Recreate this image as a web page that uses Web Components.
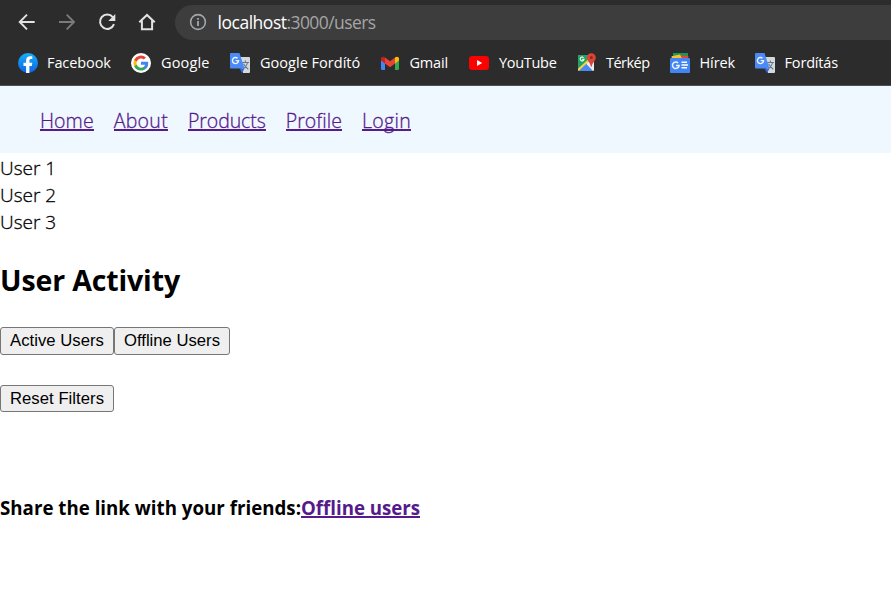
<!DOCTYPE html>
<html lang="hu">
<head>
<meta charset="utf-8">
<title>Users</title>
<style>
body{margin:0;background:#fff;color:#000;font-family:"Open Sans","Noto Sans",sans-serif}
</style>
</head>
<body>
<users-screen></users-screen>
<script>
const define = (name, html, init) => {
  const t = document.createElement('template');
  t.innerHTML = html;
  customElements.define(name, class extends HTMLElement {
    constructor() {
      super();
      this.attachShadow({mode: 'open'}).appendChild(t.content.cloneNode(true));
    }
    connectedCallback() { if (init) init(this); }
  });
};

/* Text run that spreads its letter spacing to fill a given width */
define('fit-text', `<style>:host{display:inline-block;white-space:pre}span{display:inline}</style><span><slot></slot></span>`, el => {
  const w = +el.getAttribute('w');
  const s = el.shadowRoot.querySelector('span');
  s.style.letterSpacing = (w - s.getBoundingClientRect().width) / el.textContent.length + 'px';
  el.style.width = w + 'px';
});

const g = `<path fill="#4285f4" d="M23.5 12.3c0-.9-.1-1.6-.2-2.3H12v4.5h6.5c-.3 1.5-1.1 2.8-2.4 3.6v3h3.9c2.2-2.1 3.5-5.1 3.5-8.8z"/><path fill="#34a853" d="M12 24c3.2 0 6-1.1 8-2.9l-3.9-3c-1.1.7-2.4 1.2-4.1 1.2-3.1 0-5.8-2.1-6.7-5H1.3v3.1C3.300 21.300 7.300 24 12 24z"/><path fill="#fbbc05" d="M5.300 14.300a7.200 7.200 0 010-4.600V6.600H1.300a12 12 0 000 10.800z"/><path fill="#ea4335" d="M12 4.700c1.800 0 3.300.6 4.600 1.800L20 3.100A12 12 0 001.300 6.600l4 3.100c.9-2.900 3.600-5 6.700-5z"/>`;
const smallG = (x, y, s) => `<path transform="translate(${x} ${y}) scale(${s})" fill="none" stroke="#eef4ff" stroke-width="1.5" d="M6.300 1.900A3.300 3.300 0 1 0 7.300 4.400H4.200"/>`;
const translate = `<path fill="#d5d9dd" d="M8 4h11q1 0 1 1v14q0 1-1 1h-6z"/><path fill="none" stroke="#66788a" stroke-width="1.100" d="M12 9.500h7M15.400 7.500v2M17.600 9.500q-.8 4-4.300 6.300M13.500 10.800q1.500 3.200 4.800 5.400"/><path fill="#3367d6" d="M9.500 15.500h5L12 20z"/><path fill="#4c8bf5" d="M1 0h8.500l5 15.500H1q-1 0-1-1V1q0-1 1-1z"/>${smallG(1.8,3.6,.92)}`;
const icons = {
  back: `<path fill="none" stroke="#e3e3e3" stroke-width="1.900" d="M17.700 10H3M10 2.700L2.700 10l7.300 7.300"/>`,
  forward: `<path fill="none" stroke="#7b7b7b" stroke-width="1.900" d="M2 10h14.700M9.700 2.700L17 10l-7.300 7.300"/>`,
  reload: `<path fill="none" stroke="#e3e3e3" stroke-width="2" d="M15.800 5.100A7.200 7.200 0 1 0 17 12.200"/><path fill="#e3e3e3" d="M18.300 2v7h-7z"/>`,
  home: `<path fill="none" stroke="#e3e3e3" stroke-width="2" d="M2.300 10.300L10 3l7.700 7.300M4.900 8.500v8.700h10.200V8.500"/>`,
  info: `<circle cx="10" cy="10" r="7.400" fill="none" stroke="#a5a8ab" stroke-width="1.600"/><path fill="#a5a8ab" d="M9.100 9h1.800v5H9.100zM9.100 5.900h1.800v1.900H9.100z"/>`,
  facebook: `<defs><linearGradient id="f" x2="0" y2="1"><stop stop-color="#19aefb"/><stop offset="1" stop-color="#0a65e4"/></linearGradient></defs><circle cx="10" cy="10" r="10" fill="url(#f)"/><path fill="#fff" d="M8.100 19.900v-7H5.500V9.800h2.600V7.600c0-2.900 1.600-4.300 4.200-4.300 1 0 2 .2 2 .2v2.600h-1.300c-1.200 0-1.600.7-1.600 1.500v2.200h2.900l-.5 3.100h-2.400v7a10 10 0 01-3.300 0z"/>`,
  google: `<circle cx="10" cy="10" r="10" fill="#fff"/><g transform="translate(2.400 2.500) scale(.63)">${g}</g>`,
  translate,
  gmail: `<path fill="#4285f4" d="M1 5.500l4 3V17H2.200Q1 17 1 15.800z"/><path fill="#34a853" d="M15 8.500l4-3v10.300q0 1.200-1.200 1.200H15z"/><path fill="#fbbc04" d="M15 4.500c2-1.500 4-.6 4 1.500v1.500l-4 3z"/><path fill="#c5221f" d="M1 6c0-2.100 2-3 4-1.500v6l-4-3z"/><path fill="#ea4335" d="M5 4.500l5 3.800 5-3.800v6l-5 3.800-5-3.800z"/>`,
  youtube: `<rect y="3" width="20" height="14" rx="3.300" fill="#f00"/><path fill="#fff" d="M8 7l5.200 3L8 13z"/>`,
  maps: `<clipPath id="m"><rect x="1" y="2" width="16" height="16" rx="1.500"/></clipPath><g clip-path="url(#m)"><path fill="#e4e7e8" d="M1 2h16v16H1z"/><path fill="#1fa463" d="M1 2h14v4L1 18z"/><path fill="#4a89f3" d="M1.500 18L9 10.500l7 7.500z"/><path fill="#eceff1" d="M9.200 10.300l3-3L17 12v6z"/><path fill="none" stroke="#fcd23f" stroke-width="2" d="M0 18L13 6"/></g><path transform="translate(2 3.200) scale(.72)" fill="none" stroke="#fff" stroke-width="1.500" d="M6.300 1.900A2.700 2.700 0 1 0 7 4.400H4.500"/><path fill="#dc4437" d="M14.300.2a4.500 4.500 0 014.500 4.500c0 3-3.500 4.500-4.100 9h-.8c-.6-4.500-4.100-6-4.100-9A4.500 4.500 0 0114.300.2z"/><circle cx="14.300" cy="4.600" r="1.500" fill="#8d2924"/>`,
  news: `<path fill="#0c9d58" d="M3 0h15v7H3z"/><path fill="#ea4335" d="M8 2l10.500 1-1 5H6z"/><path fill="#fbc02d" d="M1.500 3.300L10 1.500l2 4-10 1z"/><rect y="5" width="20" height="15" rx="1" fill="#4285f4"/>${smallG(1.8,8,1)}<path stroke="#fff" stroke-width="1.600" d="M11.500 9.200H17M11.500 12H18M11.500 14.800H17"/>`
};
define('ui-icon', `<style>:host{display:block;width:20px;height:20px;flex:none}svg{display:block;overflow:visible}</style><svg width="20" height="20" viewBox="0 0 20 20"></svg>`, el => {
  el.shadowRoot.querySelector('svg').innerHTML = icons[el.getAttribute('name')];
});

define('book-mark', `<style>:host{display:flex;align-items:center;gap:var(--g,9px);color:#fff;font-size:14.5px;line-height:20px}</style><slot></slot>`);

define('browser-chrome', `<style>
:host{display:flex;flex-direction:column;height:86px;box-sizing:border-box;background:#2c2c2c;border-bottom:1px solid #534f50}
.bar{display:flex;align-items:center;height:44px;padding-left:17px;gap:20px}
.omni{flex:1;height:35px;margin-left:-2px;border-radius:18px 0 0 18px;background:#3d3d3d;display:flex;align-items:center;padding-left:12.500px;box-sizing:border-box}
.url{margin-left:10px;font-size:17.500px;line-height:24px;color:#a5a5a5;display:flex}
.url .host{color:#fff}
.marks{display:grid;grid-template-columns:113px 99px 150px 89px 108px 93px 85px auto;padding-left:18px;height:38px;align-items:center}
</style>
<div class="bar"><ui-icon name="back"></ui-icon><ui-icon name="forward"></ui-icon><ui-icon name="reload"></ui-icon><ui-icon name="home"></ui-icon>
<div class="omni"><ui-icon name="info"></ui-icon><div class="url"><fit-text class="host" w="69">localhost</fit-text><fit-text w="89">:3000/users</fit-text></div></div></div>
<div class="marks">
<book-mark><ui-icon name="facebook"></ui-icon><fit-text w="63.800">Facebook</fit-text></book-mark>
<book-mark style="--g:10px"><ui-icon name="google"></ui-icon><fit-text w="48.500">Google</fit-text></book-mark>
<book-mark style="--g:10px"><ui-icon name="translate"></ui-icon><fit-text w="100.300">Google Fordító</fit-text></book-mark>
<book-mark style="--g:9.500px"><ui-icon name="gmail"></ui-icon><fit-text w="38.500">Gmail</fit-text></book-mark>
<book-mark style="--g:10px"><ui-icon name="youtube"></ui-icon><fit-text w="57.500">YouTube</fit-text></book-mark>
<book-mark><ui-icon name="maps"></ui-icon><fit-text w="43.500">Térkép</fit-text></book-mark>
<book-mark style="--g:9.500px"><ui-icon name="news"></ui-icon><fit-text w="35.500">Hírek</fit-text></book-mark>
<book-mark style="--g:9.500px"><ui-icon name="translate"></ui-icon><fit-text w="53.500">Fordítás</fit-text></book-mark>
</div>`);

define('page-link', `<style>:host{display:inline-block}a{color:#551a8b;text-decoration:none;display:block;cursor:pointer;background:linear-gradient(currentColor,currentColor) 0 var(--u,22px)/100% 2px no-repeat}</style><a><slot></slot></a>`);

define('site-nav', `<style>:host{display:flex;gap:20px;box-sizing:border-box;height:67px;padding:21px 0 0 40px;background:#f0f8ff;font-size:19.500px;font-weight:300;line-height:27px;-webkit-text-stroke:.3px;--u:22px}</style>
<page-link><fit-text w="53.700">Home</fit-text></page-link><page-link><fit-text w="54.300">About</fit-text></page-link><page-link><fit-text w="77.700">Products</fit-text></page-link><page-link><fit-text w="56.300">Profile</fit-text></page-link><page-link><fit-text w="49">Login</fit-text></page-link>`);

define('user-list', `<style>:host{display:block;font-size:19px;font-weight:300;line-height:27px;height:81px;padding-top:2px;box-sizing:border-box;-webkit-text-stroke:.3px}div{height:27px}</style>
<div><fit-text w="56">User 1</fit-text></div><div><fit-text w="56">User 2</fit-text></div><div><fit-text w="56">User 3</fit-text></div>`);

define('push-button', `<style>:host{display:block}button{display:flex;justify-content:center;align-items:center;box-sizing:border-box;width:var(--w);height:var(--h,28px);margin:0;padding:0 0 var(--pb,2px);border:1px solid #767676;border-radius:3px;background:#efefef;color:#000;font:16.670px/19px "Liberation Sans",Arial,sans-serif}</style><button><slot></slot></button>`);

define('users-screen', `<style>
:host{display:block;height:610px;overflow:hidden}
h2{margin:26px 0 0;font-size:28.500px;line-height:40px;font-weight:700;height:40px}
.row{display:flex;margin-top:27px}
.reset{margin-top:30px}
h3{margin:82px 0 0;font-size:18.700px;line-height:27px;font-weight:700;display:flex;--u:22px}
</style>
<browser-chrome></browser-chrome><site-nav></site-nav><user-list></user-list>
<h2><fit-text w="180">User Activity</fit-text></h2>
<div class="row"><push-button style="--w:114px"><fit-text w="94">Active Users</fit-text></push-button><push-button style="--w:116px"><fit-text w="96">Offline Users</fit-text></push-button></div>
<div class="row reset"><push-button style="--w:114px;--h:27px;--pb:0"><fit-text w="94">Reset Filters</fit-text></push-button></div>
<h3><fit-text w="301">Share the link with your friends:</fit-text><page-link><fit-text w="119">Offline users</fit-text></page-link></h3>`);
</script>
</body>
</html>
